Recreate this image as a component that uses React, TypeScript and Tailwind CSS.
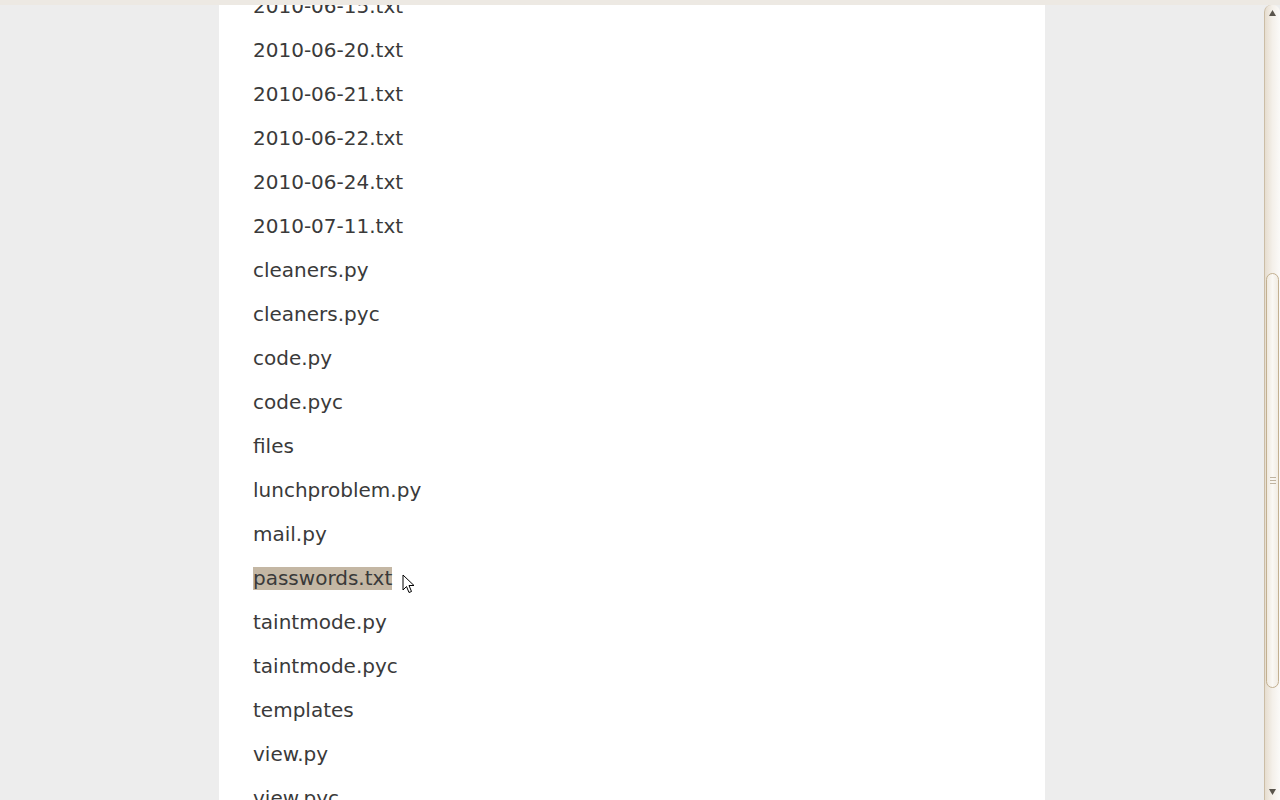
import React from "react";

const files = [
  "2010-06-15.txt",
  "2010-06-20.txt",
  "2010-06-21.txt",
  "2010-06-22.txt",
  "2010-06-24.txt",
  "2010-07-11.txt",
  "cleaners.py",
  "cleaners.pyc",
  "code.py",
  "code.pyc",
  "files",
  "lunchproblem.py",
  "mail.py",
  "passwords.txt",
  "taintmode.py",
  "taintmode.pyc",
  "templates",
  "view.py",
  "view.pyc",
];

const Cursor = () => (
  <svg width="14" height="21" viewBox="0 0 14 21" className="absolute left-[149px] top-[18px]">
    <path
      d="M1 1 L1 16 L4.5 12.5 L7 18.5 L9.5 17.5 L7 11.5 L12 11.5 Z"
      fill="#ffffff"
      stroke="#000000"
      strokeWidth="1"
      strokeLinejoin="miter"
    />
  </svg>
);

const Scrollbar = () => (
  <div className="relative w-[16px] h-full border-l border-[#cbbda6] bg-gradient-to-r from-[#e6ddcf] via-[#f4f0ea] to-[#fbfaf8] rounded-t-[7px] flex flex-col">
    <div className="h-[16px] flex items-center justify-center text-[#5a554d]">
      <svg width="7" height="6" viewBox="0 0 7 6">
        <path d="M3.5 0 L7 6 L0 6 Z" fill="currentColor" />
      </svg>
    </div>
    <div className="h-[252px]" />
    <div className="h-[415px] mx-[1px] rounded-[7px] border border-[#c2b091] bg-gradient-to-r from-[#efe9df] via-[#faf8f4] to-[#f1ece3] flex items-center justify-center">
      <div className="flex flex-col gap-[2px]">
        <div className="w-[6px] h-px bg-[#bfb39f]" />
        <div className="w-[6px] h-px bg-[#bfb39f]" />
        <div className="w-[6px] h-px bg-[#bfb39f]" />
      </div>
    </div>
    <div className="flex-1" />
    <div className="h-[16px] flex items-center justify-center text-[#5a554d]">
      <svg width="7" height="6" viewBox="0 0 7 6">
        <path d="M0 0 L7 0 L3.5 6 Z" fill="currentColor" />
      </svg>
    </div>
  </div>
);

export default function App() {
  return (
    <div
      className="w-[1280px] h-[800px] overflow-hidden flex flex-col bg-[#ededed]"
      style={{ fontFamily: '"DejaVu Sans", "Liberation Sans", sans-serif' }}
    >
      <div className="h-[5px] bg-[#ede9e3] shrink-0" />
      <div className="flex-1 flex min-h-0">
        <div className="flex-1 flex justify-center overflow-hidden">
          <div className="w-[826px] bg-white overflow-hidden">
            <ul className="-mt-[21px] pl-[34px] text-[20px] text-[#3a3a3a]">
              {files.map((name) => (
                <li key={name} className="relative h-[44px] flex items-center">
                  <span className={name === "passwords.txt" ? "bg-[#c4b7a4] leading-[23px]" : "leading-[23px]"}>
                    {name}
                  </span>
                  {name === "passwords.txt" && <Cursor />}
                </li>
              ))}
            </ul>
          </div>
        </div>
        <Scrollbar />
      </div>
    </div>
  );
}
